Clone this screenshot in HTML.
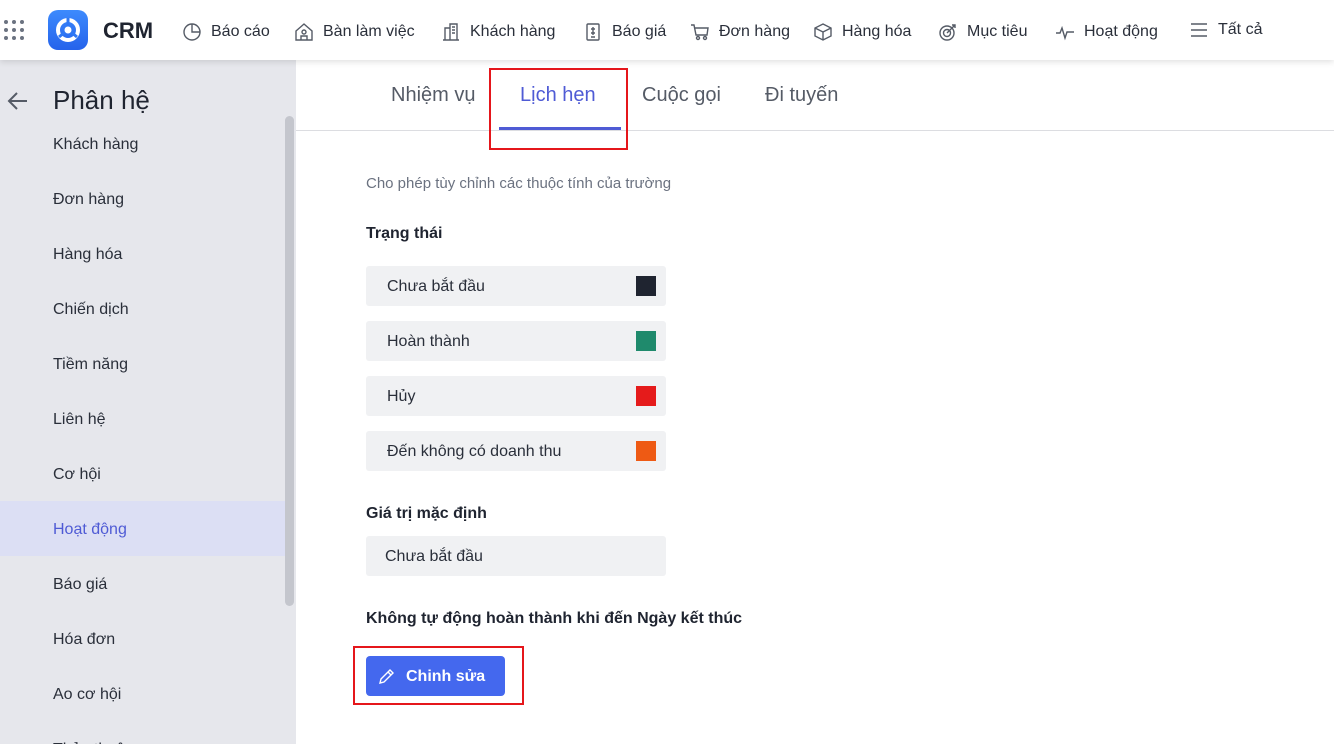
<!DOCTYPE html><html><head><meta charset="utf-8"><style>
*{margin:0;padding:0;box-sizing:border-box}
body{width:1334px;height:744px;overflow:hidden;background:#fff;font-family:"Liberation Sans","Noto Sans CJK SC",sans-serif;color:#1f2430;position:relative}
.top{position:absolute;left:0;top:0;width:1334px;height:60px;background:#fff;box-shadow:0 2px 6px rgba(0,0,0,.12);z-index:2}
.nav{position:absolute;top:22px;font-size:16px;color:#2a2f3a;display:flex;align-items:center;gap:9px}
.nav svg{width:20px;height:20px;fill:none;stroke:#555b66;stroke-width:1.4}
.side{position:absolute;left:0;top:60px;width:296px;height:684px;background:#e6e7ec;overflow:hidden}
.si{position:absolute;left:0;width:285px;height:55px;line-height:57px;padding-left:53px;font-size:16px;color:#2a2f3a}
.tab{position:absolute;top:84px;font-size:20px;color:#555b66}
.row{position:absolute;left:366px;width:300px;height:40px;background:#f0f1f3;border-radius:3px;font-size:16px;line-height:41px;padding-left:21px;color:#2a2f3a}
.sq{position:absolute;left:270px;top:10px;width:20px;height:20px}
.lbl{position:absolute;left:366px;font-size:16px;font-weight:bold;color:#1f2430}
.red{position:absolute;border:2px solid #e5161b}
</style></head><body>
<div class="top">
<svg style="position:absolute;left:3px;top:19px" width="22" height="22"><g fill="#6b7280"><circle cx="3" cy="3" r="2"/><circle cx="11" cy="3" r="2"/><circle cx="19" cy="3" r="2"/><circle cx="3" cy="11" r="2"/><circle cx="11" cy="11" r="2"/><circle cx="19" cy="11" r="2"/><circle cx="3" cy="19" r="2"/><circle cx="11" cy="19" r="2"/><circle cx="19" cy="19" r="2"/></g></svg>
<div style="position:absolute;left:48px;top:10px;width:40px;height:40px;border-radius:10px;background:linear-gradient(#3d8bfd,#2563eb)"><svg width="40" height="40"><circle cx="20" cy="20" r="10" fill="none" stroke="#fff" stroke-width="4"/><circle cx="20" cy="20" r="3.5" fill="#fff"/><path d="M20 8v8M11 27l6-5M29 27l-6-5" stroke="#2f78f5" stroke-width="3"/></svg></div>
<div style="position:absolute;left:103px;top:18px;font-size:22px;font-weight:bold;color:#1f2430">CRM</div>
<div class="nav" style="left:182px"><svg viewBox="0 0 20 20"><circle cx="10" cy="10" r="8"/><path d="M10 2v8h8"/></svg>Báo cáo</div>
<div class="nav" style="left:294px"><svg viewBox="0 0 20 20"><path d="M2 9l8-7 8 7v9H2z"/><circle cx="10" cy="10" r="2"/><path d="M7 18v-4h6v4"/></svg>Bàn làm việc</div>
<div class="nav" style="left:441px"><svg viewBox="0 0 20 20"><path d="M2 18h16M4 18V6h5v12M9 18V2h7v16M11 5h3M11 8h3M11 11h3"/></svg>Khách hàng</div>
<div class="nav" style="left:583px"><svg viewBox="0 0 20 20"><rect x="4" y="2" width="12" height="16" rx="1"/><path d="M10 5v8M8 7h4M8 11h4M8 15h4"/></svg>Báo giá</div>
<div class="nav" style="left:690px"><svg viewBox="0 0 20 20"><path d="M1 3h3l2 10h11l1-7H5"/><circle cx="8" cy="16" r="1.5"/><circle cx="15" cy="16" r="1.5"/></svg>Đơn hàng</div>
<div class="nav" style="left:813px"><svg viewBox="0 0 20 20"><path d="M10 2l8 4v8l-8 4-8-4V6zM2 6l8 4 8-4M10 10v8"/></svg>Hàng hóa</div>
<div class="nav" style="left:938px"><svg viewBox="0 0 20 20"><circle cx="9" cy="11" r="7"/><circle cx="9" cy="11" r="3.5"/><path d="M9 11l8-8M14 3h3v3"/></svg>Mục tiêu</div>
<div class="nav" style="left:1055px"><svg viewBox="0 0 20 20"><path d="M1 11h4l2-5 3 10 2-6h7"/></svg>Hoạt động</div>
<div class="nav" style="left:1189px;top:20px"><svg viewBox="0 0 20 20"><path d="M2 4h16M2 10h16M2 16h16"/></svg>Tất cả</div>
</div>
<div class="side">
<svg style="position:absolute;left:7px;top:31px" width="22" height="20"><path d="M20 10H2M10 2L2 10l8 8" fill="none" stroke="#555b66" stroke-width="2"/></svg>
<div style="position:absolute;left:53px;top:25px;font-size:26px;color:#1f2430">Phân hệ</div>
<div class="si" style="top:56px">Khách hàng</div>
<div class="si" style="top:111px">Đơn hàng</div>
<div class="si" style="top:166px">Hàng hóa</div>
<div class="si" style="top:221px">Chiến dịch</div>
<div class="si" style="top:276px">Tiềm năng</div>
<div class="si" style="top:331px">Liên hệ</div>
<div class="si" style="top:386px">Cơ hội</div>
<div class="si" style="top:441px;background:#dcdff4;color:#4f5bd5">Hoạt động</div>
<div class="si" style="top:496px">Báo giá</div>
<div class="si" style="top:551px">Hóa đơn</div>
<div class="si" style="top:606px">Ao cơ hội</div>
<div class="si" style="top:661px">Thỏa thuận</div>
<div style="position:absolute;left:285px;top:56px;width:9px;height:490px;background:#c4c6cd;border-radius:5px"></div>
</div>
<div class="tab" style="left:391px">Nhiệm vụ</div>
<div class="tab" style="left:520px;color:#4f5bd5">Lịch hẹn</div>
<div class="tab" style="left:642px">Cuộc gọi</div>
<div class="tab" style="left:765px">Đi tuyến</div>
<div style="position:absolute;left:296px;top:130px;width:1038px;height:1px;background:#dcdde1"></div>
<div style="position:absolute;left:499px;top:127px;width:122px;height:3px;background:#4f5bd5"></div>
<div class="red" style="left:489px;top:68px;width:139px;height:82px"></div>
<div style="position:absolute;left:366px;top:175px;font-size:15px;color:#6b7280">Cho phép tùy chỉnh các thuộc tính của trường</div>
<div class="lbl" style="top:225px">Trạng thái</div>
<div class="row" style="top:266px">Chưa bắt đầu<div class="sq" style="background:#1f2430"></div></div>
<div class="row" style="top:321px">Hoàn thành<div class="sq" style="background:#1f8a6c"></div></div>
<div class="row" style="top:376px">Hủy<div class="sq" style="background:#e51b1b"></div></div>
<div class="row" style="top:431px">Đến không có doanh thu<div class="sq" style="background:#ee5a14"></div></div>
<div class="lbl" style="top:505px">Giá trị mặc định</div>
<div class="row" style="top:536px;padding-left:19px">Chưa bắt đầu</div>
<div class="lbl" style="top:610px">Không tự động hoàn thành khi đến Ngày kết thúc</div>
<div class="red" style="left:353px;top:646px;width:171px;height:59px"></div>
<div style="position:absolute;left:366px;top:656px;width:139px;height:40px;background:#4468ee;border-radius:4px;color:#fff;font-weight:bold;font-size:16px;line-height:41px;padding-left:40px">Chinh sửa
<svg style="position:absolute;left:12px;top:11px" width="18" height="18" viewBox="0 0 18 18"><path d="M2 16l1-4L12 3l3 3-9 9zM10 5l3 3" fill="none" stroke="#fff" stroke-width="1.4"/></svg></div>
</body></html>
